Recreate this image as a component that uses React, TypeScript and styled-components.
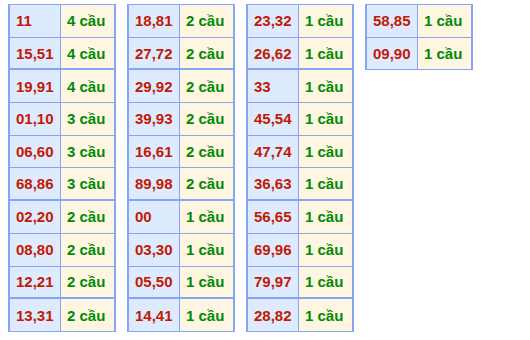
import React from 'react'
import styled, { createGlobalStyle } from 'styled-components'

type Pair = {
    num: string
    count: number
}

type TableProps = {
    rows: Pair[]
}

const columns: Pair[][] = [
    [
        { num: '11', count: 4 },
        { num: '15,51', count: 4 },
        { num: '19,91', count: 4 },
        { num: '01,10', count: 3 },
        { num: '06,60', count: 3 },
        { num: '68,86', count: 3 },
        { num: '02,20', count: 2 },
        { num: '08,80', count: 2 },
        { num: '12,21', count: 2 },
        { num: '13,31', count: 2 },
    ],
    [
        { num: '18,81', count: 2 },
        { num: '27,72', count: 2 },
        { num: '29,92', count: 2 },
        { num: '39,93', count: 2 },
        { num: '16,61', count: 2 },
        { num: '89,98', count: 2 },
        { num: '00', count: 1 },
        { num: '03,30', count: 1 },
        { num: '05,50', count: 1 },
        { num: '14,41', count: 1 },
    ],
    [
        { num: '23,32', count: 1 },
        { num: '26,62', count: 1 },
        { num: '33', count: 1 },
        { num: '45,54', count: 1 },
        { num: '47,74', count: 1 },
        { num: '36,63', count: 1 },
        { num: '56,65', count: 1 },
        { num: '69,96', count: 1 },
        { num: '79,97', count: 1 },
        { num: '28,82', count: 1 },
    ],
    [
        { num: '58,85', count: 1 },
        { num: '09,90', count: 1 },
    ],
]

// rows whose bottom rule renders heavier in the original
const heavyRows = [1, 5, 8]

const LotoTable = ({ rows }: TableProps) => (
    <Table>
        {rows.map((row, index) => (
            <Row key={row.num} $heavy={heavyRows.includes(index) && index < rows.length - 1}>
                <NumCell>{row.num}</NumCell>
                <CountCell>{row.count} cầu</CountCell>
            </Row>
        ))}
    </Table>
)

const App = () => (
    <>
        <GlobalStyle />
        <Board>
            {columns.map((rows, index) => (
                <LotoTable key={index} rows={rows} />
            ))}
        </Board>
    </>
)


/* Style */
const GlobalStyle = createGlobalStyle`
    html, body {
        margin: 0;
        padding: 0;
        background: #fff;
    }
    body {
        font-family: "Liberation Sans", Arial, sans-serif;
    }
`
const Board = styled.div`
    display: flex;
    align-items: flex-start;
    gap: 11px;
    padding: 4px 8px;
`
const Table = styled.div`
    width: 108px;
    box-sizing: border-box;
    border-top: 1px solid #87a5f5;
    border-left: 2px solid #87a5f5;
    border-right: 2px solid #87a5f5;
    display: flex;
    flex-direction: column;
`
const Row = styled.div<{ $heavy?: boolean }>`
    display: grid;
    grid-template-columns: 51px 1fr;
    height: 32.7px;
    box-sizing: border-box;
    border-bottom: ${(p) => (p.$heavy ? '2px' : '1px')} solid #87a5f5;
`
const Cell = styled.div`
    display: flex;
    align-items: center;
    padding-left: 6px;
    font-size: 15px;
    font-weight: bold;
    white-space: nowrap;
`
const NumCell = styled(Cell)`
    background: #deebfe;
    color: #c01a04;
    border-right: 1px solid #87a5f5;
`
const CountCell = styled(Cell)`
    background: #fff6e1;
    color: #008a08;
`

export default App
